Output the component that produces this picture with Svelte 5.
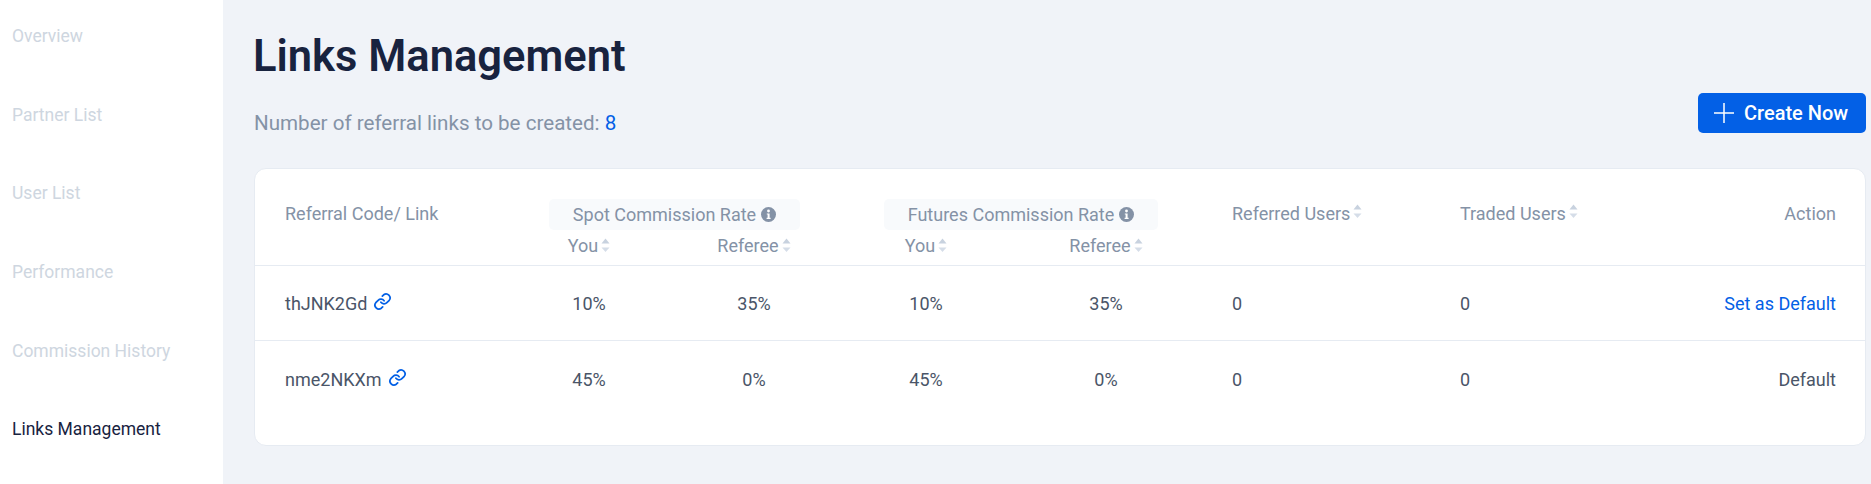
<script>
  const navItems = ["Overview", "Partner List", "User List", "Performance", "Commission History", "Links Management"];
  const rows = [
    { code: "thJNK2Gd", spot: ["10%", "35%"], futures: ["10%", "35%"], referred: 0, traded: 0, isDefault: false },
    { code: "nme2NKXm", spot: ["45%", "0%"], futures: ["45%", "0%"], referred: 0, traded: 0, isDefault: true }
  ];
</script>

{#snippet sort()}
  <svg class="sort" width="9" height="15" viewBox="0 0 9 15"><path d="M4.5 0.5 8.5 5.5H0.5Z" fill="#c8d2df" /><path d="M0.5 9.5H8.5L4.5 14Z" fill="#d5dde8" /></svg>
{/snippet}

{#snippet info()}
  <svg class="info" width="15" height="15" viewBox="0 0 15 15"><circle cx="7.5" cy="7.5" r="7.5" fill="#8492a6" /><circle cx="7.5" cy="4" r="1.4" fill="#fff" /><path d="M5.8 6.4H8.6V10.8H9.6V12H5.6V10.8H6.6V7.6H5.8Z" fill="#fff" /></svg>
{/snippet}

<div class="page">
  <nav class="sidebar">
    {#each navItems as item, i}
      <div class="nav-item" class:active={i === navItems.length - 1}>{item}</div>
    {/each}
  </nav>

  <main class="content">
    <header class="head">
      <div>
        <h1>Links Management</h1>
        <p class="quota">Number of referral links to be created: <span class="blue">8</span></p>
      </div>
      <button class="create">
        <svg width="20" height="20" viewBox="0 0 20 20"><path d="M10 0V20M0 10H20" stroke="#fff" stroke-width="1.5" /></svg>
        Create Now
      </button>
    </header>

    <section class="card">
      <div class="grid thead">
        <div class="cell first th">Referral Code/ Link</div>
        <div class="group spot">
          <div class="pill">Spot Commission Rate {@render info()}</div>
          <div class="pair">
            <span class="you">You {@render sort()}</span>
            <span class="ref">Referee {@render sort()}</span>
          </div>
        </div>
        <div></div>
        <div class="group futures">
          <div class="pill">Futures Commission Rate {@render info()}</div>
          <div class="pair">
            <span class="you">You {@render sort()}</span>
            <span class="ref">Referee {@render sort()}</span>
          </div>
        </div>
        <div></div>
        <div class="cell th">Referred Users {@render sort()}</div>
        <div class="cell th">Traded Users {@render sort()}</div>
        <div class="cell th action">Action</div>
      </div>

      {#each rows as row}
        <div class="grid tr">
          <div class="first code">
            {row.code}
            <svg class="link" width="19" height="19" viewBox="0 0 24 24" fill="none" stroke="#0360e6" stroke-width="2.2" stroke-linecap="round" stroke-linejoin="round"><path d="M10 13a5 5 0 0 0 7.5.5l3-3a5 5 0 0 0-7-7l-1.7 1.7" /><path d="M14 11a5 5 0 0 0-7.5-.5l-3 3a5 5 0 0 0 7 7l1.7-1.7" /></svg>
          </div>
          <div class="pair spot"><span class="you">{row.spot[0]}</span><span class="ref">{row.spot[1]}</span></div>
          <div></div>
          <div class="pair futures"><span class="you">{row.futures[0]}</span><span class="ref">{row.futures[1]}</span></div>
          <div></div>
          <div>{row.referred}</div>
          <div>{row.traded}</div>
          <div class="action">
            {#if row.isDefault}Default{:else}<span class="blue">Set as Default</span>{/if}
          </div>
        </div>
      {/each}
    </section>
  </main>
</div>

<style>
  :global(body) {
    margin: 0;
    background: #f0f3f8;
    font-family: Roboto, "Liberation Sans", sans-serif;
  }

  .page {
    display: flex;
    min-height: 100vh;
    overflow: hidden;
  }

  .sidebar {
    width: 223px;
    flex: none;
    box-sizing: border-box;
    padding: 24px 12px 0;
    background: #fff;
    display: flex;
    flex-direction: column;
    gap: 54.7px;
  }

  .nav-item {
    font-size: 17.5px;
    line-height: 24px;
    color: #ced6e0;
    white-space: nowrap;
  }

  .nav-item.active {
    color: #18233f;
  }

  .content {
    flex: 1;
    min-width: 0;
    padding: 32px 5px 0 31px;
  }

  .head {
    display: flex;
    justify-content: space-between;
    align-items: flex-end;
  }

  h1 {
    margin: 0 0 0 -1px;
    font-size: 43.5px;
    line-height: 50px;
    font-weight: 600;
    color: #18233f;
  }

  .quota {
    margin: 29px 0 0;
    font-size: 20.6px;
    line-height: 24px;
    color: #8492a6;
  }

  .blue {
    color: #0360e6;
  }

  .create {
    display: flex;
    align-items: center;
    gap: 10px;
    height: 40px;
    width: 168px;
    box-sizing: border-box;
    padding: 0 16px;
    margin-bottom: 2px;
    border: none;
    border-radius: 5px;
    background: #0360e6;
    color: #fff;
    font: 500 20px Roboto, sans-serif;
    white-space: nowrap;
  }

  .card {
    margin-top: 33px;
    height: 278px;
    box-sizing: border-box;
    background: #fff;
    border: 1px solid #e6ebf2;
    border-radius: 12px;
    color: #4a5568;
    font-size: 18px;
  }

  .grid {
    display: grid;
    grid-template-columns: 294px 251px 84px 274px 74px 228px 200px 1fr;
  }

  .thead {
    height: 97px;
    box-sizing: border-box;
    padding-top: 30px;
    color: #8492a6;
    border-bottom: 1px solid #e6ebf2;
  }

  .cell {
    display: flex;
    align-items: center;
    gap: 3px;
    height: 31px;
    padding-bottom: 2px;
    box-sizing: border-box;
  }

  .th .sort {
    margin-top: -4px;
  }

  .first {
    padding-left: 30px;
  }

  .pill {
    display: flex;
    align-items: center;
    justify-content: center;
    gap: 5px;
    height: 31px;
    padding-bottom: 1px;
    box-sizing: border-box;
    background: #f8fafc;
    border-radius: 5px;
  }

  .thead .pair {
    height: 31px;
  }

  .pair {
    display: flex;
    justify-content: space-between;
    align-items: center;
  }

  .pair span {
    display: flex;
    align-items: center;
    justify-content: center;
    gap: 3px;
  }

  .spot .you { width: 80px; }
  .spot .ref { width: 92px; }
  .futures .you { width: 84px; }
  .futures .ref { width: 104px; }

  .tr {
    height: 74px;
    align-items: center;
  }

  .tr + .tr {
    border-top: 1px solid #e6ebf2;
    height: 76px;
  }

  .code {
    display: flex;
    align-items: center;
    gap: 6px;
  }

  .action {
    justify-content: flex-end;
    text-align: right;
    padding-right: 29px;
  }

  .link {
    margin-top: -3px;
  }
</style>
